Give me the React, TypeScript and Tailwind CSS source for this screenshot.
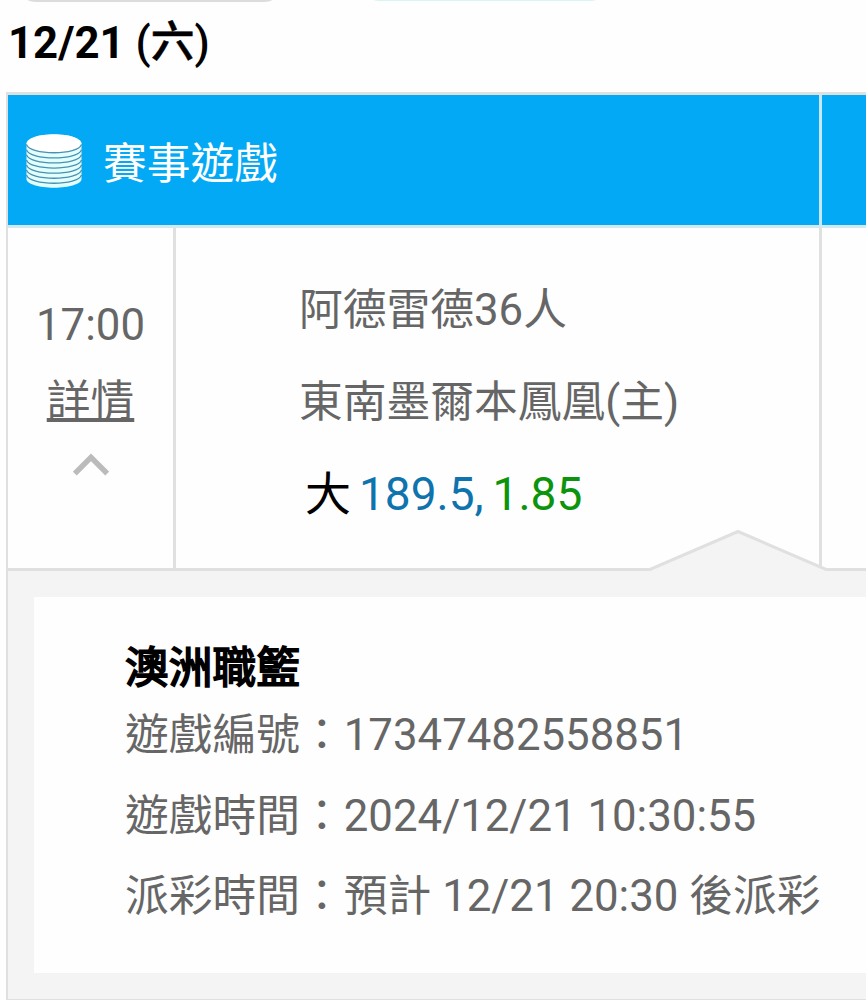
const details = [
  { label: "遊戲編號", value: "17347482558851" },
  { label: "遊戲時間", value: "2024/12/21 10:30:55" },
  { label: "派彩時間", value: "預計 12/21 20:30 後派彩" },
];

function CoinsIcon() {
  return (
    <svg className="h-[54px] w-[56px] shrink-0" viewBox="0 0 56 54" fill="none">
      <path d="M.5 10C.5 4.500 12.500.3 28 .3S55.500 4.500 55.500 10V45C55.500 50 43 53.700 28 53.700S.5 50 .5 45Z" fill="#e2ffff" />
      <ellipse cx="28" cy="9.700" rx="27.500" ry="9.300" fill="#fff" />
      {[10.500, 15.600, 20.700, 25.800, 30.900, 36, 41].map((y) => (
        <path key={y} d={`M.5 ${y}C3 ${y + 11} 53 ${y + 11} 55.500 ${y}`} stroke="#4b90b0" strokeWidth="1.300" />
      ))}
    </svg>
  );
}

export default function App() {
  return (
    <main className="flex h-[1000px] w-[866px] flex-col overflow-hidden bg-[#fefefe] font-[Roboto,'Noto_Sans_CJK_TC',sans-serif] text-[43.75px] leading-[50px] text-[#666]">
      <div className="flex h-[2px] shrink-0 gap-[76px] pl-[16px]">
        <div className="flex h-[2px] w-[268px] flex-col justify-end overflow-hidden">
          <div className="h-10 shrink-0 rounded-[20px] border-2 border-[#dcdcdc]" />
        </div>
        <div className="flex h-px w-[250px] flex-col justify-end overflow-hidden">
          <div className="h-10 shrink-0 rounded-[20px] border-2 border-[#d5f5f1]" />
        </div>
      </div>
      <h1 className="h-[90px] shrink-0 pt-[16px] pl-2 font-bold text-black">
        12/21 <span className="font-medium">(<span className="align-[1px] leading-none [-webkit-text-stroke:0.5px_black]">六</span>)</span>
      </h1>

      <section className="ml-[6px] flex w-[900px] grow flex-col border-t-[3px] border-l-2 border-[#e0e0e0]">
        <header className="flex h-[133px] shrink-0 border-b-[3px] border-[#d3e9f2] bg-[#04a9f6] text-white">
          <div className="flex w-[814px] shrink-0 items-center gap-[21px] border-r-[3px] border-[#c7e9f6] pt-px pl-[18px]">
            <CoinsIcon />
            <span className="pt-[7px]">賽事遊戲</span>
          </div>
        </header>

        <div className="relative flex h-[343px] shrink-0 border-b-[3px] border-[#e0e0e0]">
          <div className="flex w-[168px] shrink-0 flex-col items-center border-r-[3px] border-[#e0e0e0] pt-[72px]">
            <span>17:00</span>
            <a className="mt-[26px] underline decoration-[4px] underline-offset-[2px] [text-decoration-skip-ink:none]">詳情</a>
            <svg className="mt-[27px] h-[23px] w-[36px]" viewBox="0 0 36 23" fill="none">
              <path d="M1.800 20.500 18 4.300 34.200 20.500" stroke="#bbb" strokeWidth="5.500" />
            </svg>
          </div>
          <div className="flex w-[646px] shrink-0 flex-col gap-[42px] border-r-[3px] border-[#e0e0e0] pt-[57px] pl-[123px]">
            <p>阿德雷德36人</p>
            <p>東南墨爾本鳳凰(主)</p>
            <p className="flex pl-[6px] text-[46px]">
              <span className="mr-[8px] text-black">大</span>
              <span className="mr-[9px] text-[#0f73ae]">189.5,</span>
              <span className="text-[#0c940c]">1.85</span>
            </p>
          </div>
          <svg className="absolute top-[301px] left-[640px] h-[44px] w-[182px]" viewBox="0 0 182 44">
            <path d="M0 41.500 90 2.500 180 41.500V44H0Z" fill="#f4f4f4" />
            <path d="M0 40.500H2L90 2.500 178 40.500H182" fill="none" stroke="#e0e0e0" strokeWidth="3" />
          </svg>
        </div>

        <div className="flex h-[430px] shrink-0 flex-col border-b-2 border-[#e0e0e0] bg-[#f4f4f4] pt-[26px] pl-[26px]">
          <div className="h-[376px] shrink-0 bg-[#fefefe] pt-[46px] pl-[91px]">
            <h2 className="text-black [-webkit-text-stroke:1.8px_black]">澳洲職籃</h2>
            <dl className="flex flex-col gap-[30.500px] pt-[17px]">
              {details.map((d) => (
                <div key={d.label} className="flex whitespace-nowrap">
                  <dt>{d.label}：</dt>
                  <dd>{d.value}</dd>
                </div>
              ))}
            </dl>
          </div>
        </div>
      </section>
    </main>
  );
}
